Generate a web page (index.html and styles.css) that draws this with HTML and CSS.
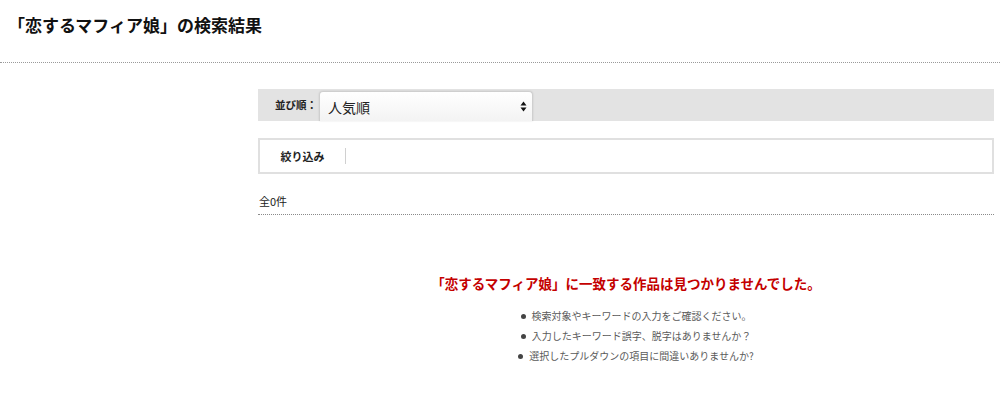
FILE: index.html
```html
<!DOCTYPE html>
<html lang="ja">
<head>
<meta charset="utf-8">
<title>検索結果</title>
<link rel="stylesheet" href="styles.css">
</head>
<body>
<header class="page-header">
  <h1 class="page-title">「恋するマフィア娘」の検索結果</h1>
</header>
<main class="results">
  <div class="sort-bar">
    <span class="sort-label">並び順：</span>
    <div class="sort-select">
      <span class="sort-value">人気順</span>
      <svg class="sort-arrows" width="7" height="11" viewBox="0 0 7 11"><path d="M3.5 0.5 L6.5 4.5 L0.5 4.5 Z M3.5 10.5 L6.5 6.5 L0.5 6.5 Z" fill="#111"/></svg>
    </div>
  </div>
  <div class="filter-box">
    <div class="filter-label">絞り込み</div>
    <div class="filter-sep"></div>
  </div>
  <div class="result-count">全0件</div>
  <div class="no-result">
    <p class="no-result-title">「恋するマフィア娘」に一致する作品は見つかりませんでした。</p>
    <ul class="hints">
      <li>検索対象やキーワードの入力をご確認ください。</li>
      <li>入力したキーワード誤字、脱字はありませんか？</li>
      <li>選択したプルダウンの項目に間違いありませんか?</li>
    </ul>
  </div>
</main>
</body>
</html>
```

FILE: styles.css
```css
* { box-sizing: border-box; }
html, body { margin: 0; padding: 0; background: #fff; }
body {
  font-family: "Noto Sans CJK JP", "Noto Sans", sans-serif;
  color: #222;
}
.page-header {
  height: 63px;
  border-bottom: 1px dotted #9a9a9a;
  padding: 13px 0 0 8px;
}
.page-title {
  margin: 0;
  font-size: 17px;
  line-height: 24px;
  font-weight: bold;
  color: #111;
}
.results {
  margin-left: 258px;
  width: 736px;
}
.sort-bar {
  margin-top: 26px;
  height: 32px;
  background: #e3e3e3;
  display: flex;
  align-items: flex-end;
  padding-left: 17px;
}
.sort-label {
  font-size: 10.5px;
  font-weight: bold;
  line-height: 30px;
  align-self: center;
  color: #222;
  white-space: nowrap;
  margin-right: 2px;
  flex: none;
}
.sort-select {
  width: 214px;
  height: 30px;
  flex: none;
  border: 1px solid #cfcfcf;
  border-bottom: none;
  border-radius: 4px 4px 0 0;
  background: linear-gradient(#ffffff, #f3f3f3);
  box-shadow: 0 0 2px rgba(0,0,0,0.12);
  display: flex;
  align-items: center;
  justify-content: space-between;
  padding: 0 5px 0 8px;
}
.sort-value {
  font-size: 14px;
  color: #222;
}
.sort-arrows { display: block; }
.filter-box {
  margin-top: 17px;
  height: 36px;
  border: 2px solid #e0e0e0;
  display: flex;
  align-items: center;
}
.filter-label {
  width: 85px;
  text-align: center;
  font-size: 11px;
  font-weight: bold;
  color: #222;
}
.filter-sep {
  width: 1px;
  height: 16px;
  background: #d0d0d0;
}
.result-count {
  margin-top: 16px;
  font-size: 11px;
  line-height: 22px;
  border-bottom: 1px dotted #8a8a8a;
  padding-left: 1px;
  padding-bottom: 2px;
  color: #222;
}
.no-result {
  margin-top: 58px;
  text-align: center;
}
.no-result-title {
  margin: 0;
  font-size: 13.5px;
  line-height: 20px;
  font-weight: bold;
  color: #c40000;
}
.hints {
  list-style: none;
  margin: 13px 0 0;
  padding: 0 0 0 20px;
  font-size: 10px;
  line-height: 20px;
  color: #5a5a5a;
}
.hints li::before {
  content: "";
  display: inline-block;
  width: 5px;
  height: 5px;
  border-radius: 50%;
  background: #444;
  margin-right: 6px;
  vertical-align: 1px;
}
```
